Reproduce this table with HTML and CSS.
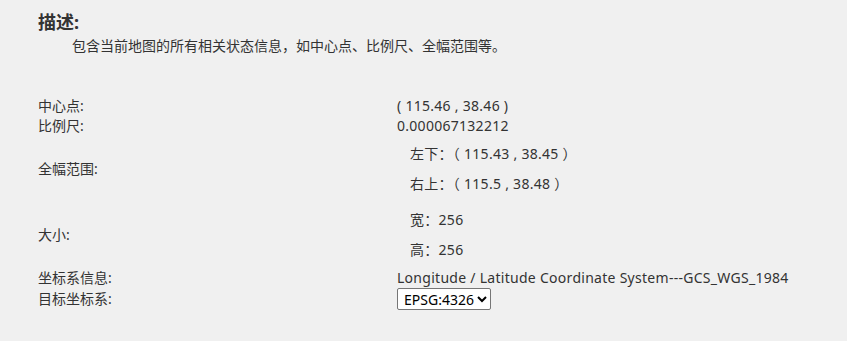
FILE: index.html
```html
<!DOCTYPE html>
<html lang="zh-CN">
<head>
<meta charset="utf-8">
<title>地图状态</title>
<link rel="stylesheet" href="styles.css">
</head>
<body>
<div class="wrap">
  <h3 class="title">描述:</h3>
  <p class="desc">包含当前地图的所有相关状态信息，如中心点、比例尺、全幅范围等。</p>
  <div class="info">
    <div class="label row">中心点:</div>
    <div class="value row">( 115.46 , 38.46 )</div>

    <div class="label row">比例尺:</div>
    <div class="value row">0.000067132212</div>

    <div class="label">全幅范围:</div>
    <div class="value sub">
      <div class="sub-line">左下：（ 115.43 , 38.45 ）</div>
      <div class="sub-line">右上：（ 115.5 , 38.48 ）</div>
    </div>

    <div class="label">大小:</div>
    <div class="value sub">
      <div class="sub-line">宽：256</div>
      <div class="sub-line">高：256</div>
    </div>

    <div class="label row">坐标系信息:</div>
    <div class="value row">Longitude / Latitude Coordinate System---GCS_WGS_1984</div>

    <div class="label row">目标坐标系:</div>
    <div class="value row">
      <select class="crs">
        <option>EPSG:4326</option>
        <option>EPSG:3857</option>
      </select>
    </div>
  </div>
</div>
</body>
</html>
```

FILE: styles.css
```css
html, body {
  margin: 0;
  padding: 0;
  background: #f0f0f0;
}

body {
  font-family: "Noto Sans", "Noto Sans CJK SC", sans-serif;
  font-size: 14px;
  color: #333;
}

.wrap {
  padding: 10px 38px 0 38px;
}

.title {
  margin: 0;
  font-size: 18px;
  font-weight: bold;
  line-height: 24px;
}

.desc {
  margin: 2px 0 0 0;
  padding-left: 34px;
  line-height: 20px;
}

.info {
  margin-top: 40px;
  display: grid;
  grid-template-columns: 359px 1fr;
  align-items: center;
}

.row {
  line-height: 20px;
}

.label {
  line-height: 20px;
}

.value {
  letter-spacing: 0.28px;
}

.sub {
  display: flex;
  flex-direction: column;
  gap: 9px;
  padding: 7px 0 8px 13px;
}

.sub-line {
  line-height: 21px;
}

.crs {
  font-family: "Noto Sans", "Noto Sans CJK SC", sans-serif;
  font-size: 14px;
  letter-spacing: 0;
  color: #000;
  background: #fff;
  border: 1px solid #767676;
  border-radius: 2px;
  height: 22px;
  padding: 0 0 0 2px;
  margin: 0;
}
```
